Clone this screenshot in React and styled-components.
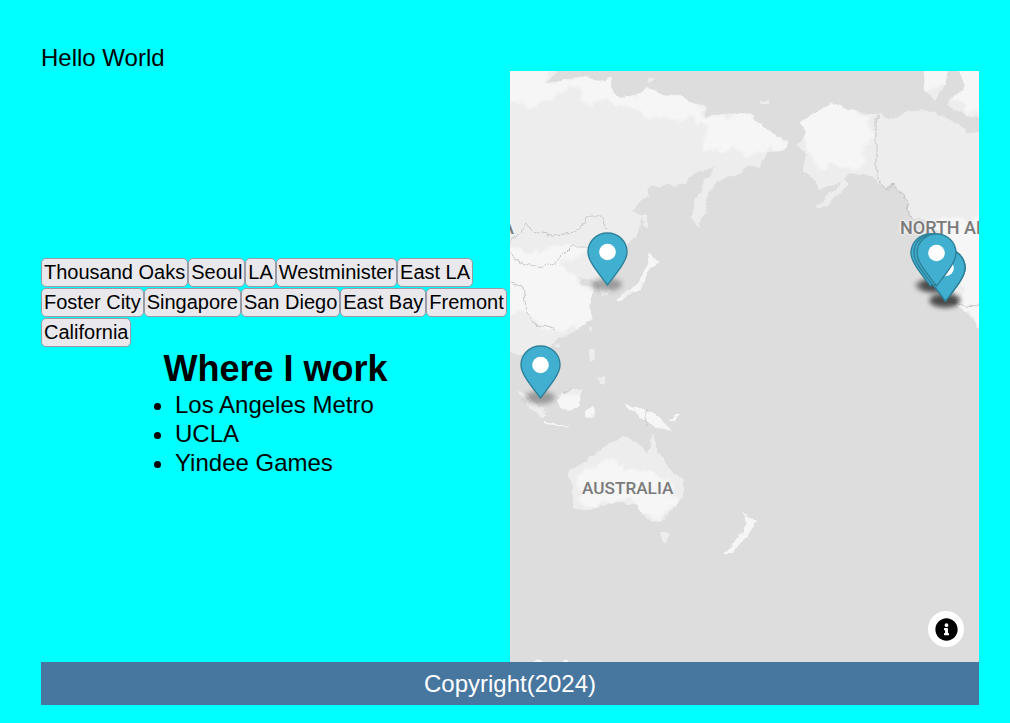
import React from 'react';
import styled, { createGlobalStyle } from 'styled-components';
import { FaInfoCircle } from 'react-icons/fa';

const GlobalStyle = createGlobalStyle`
  html, body {
    margin: 0;
    padding: 0;
    background: #00ffff;
    font-family: "Liberation Sans", Arial, sans-serif;
  }
`;

// ==============================================
// page layout
// ==============================================

const Page = styled.div`
  width: 1010px;
  height: 723px;
  box-sizing: border-box;
  padding: 44px 31px 18px 41px;
  display: flex;
  flex-direction: column;
  overflow: hidden;
`;

const Greeting = styled.div`
  font-size: 24px;
  line-height: 27px;
  color: #000;
`;

const Main = styled.main`
  display: grid;
  grid-template-columns: 469px 469px;
  height: 591px;
`;

const InfoColumn = styled.section`
  display: flex;
  flex-direction: column;
  justify-content: center;
  padding-top: 2px;
`;

const Footer = styled.footer`
  height: 43px;
  display: flex;
  align-items: center;
  justify-content: center;
  background: #47769f;
  color: #fff;
  font-size: 24px;
`;

// ==============================================
// city buttons and text
// ==============================================

const CityList = styled.div`
  display: flex;
  flex-wrap: wrap;
`;

const CityButton = styled.button`
  height: 29px;
  box-sizing: border-box;
  margin: 0 0 1px 0;
  padding: 0 2px;
  background: #e9e9ed;
  border: 1px solid #9a9aa6;
  border-radius: 5px;
  color: #000;
  font-family: inherit;
  font-size: 20px;
`;

const Heading = styled.h1`
  margin: 0;
  font-size: 36px;
  line-height: 41px;
  font-weight: 700;
  text-align: center;
`;

const WorkList = styled.ul`
  margin: 1px 0 0 134px;
  padding: 0;
  font-size: 24px;
  line-height: 29px;
`;

// ==============================================
// map
// ==============================================

const MapPanel = styled.div`
  position: relative;
  overflow: hidden;
  background: #dddddd;
`;

const MapDrawing = styled.svg`
  display: block;
  width: 469px;
  height: 591px;
`;

const MapLabel = styled.span`
  position: absolute;
  left: ${(p) => p.$left}px;
  top: ${(p) => p.$top}px;
  font-family: Roboto, "Liberation Sans", sans-serif;
  font-size: ${(p) => p.$size}px;
  font-weight: 500;
  line-height: 18px;
  white-space: nowrap;
  color: #7b7b7b;
  text-shadow: 0 0 3px #f4f4f4, 0 0 3px #f4f4f4, 0 0 3px #f4f4f4;
`;

const PinShadow = styled.div`
  position: absolute;
  left: ${(p) => p.$x - 15}px;
  top: ${(p) => p.$y - 7}px;
  width: 30px;
  height: 13px;
  border-radius: 50%;
  background: rgba(0, 0, 0, 0.3);
  filter: blur(2.5px);
`;

const PinMark = styled.svg`
  position: absolute;
  left: ${(p) => p.$x - 20.5}px;
  top: ${(p) => p.$y - 53}px;
  width: 41px;
  height: 54px;
`;

const InfoButton = styled.div`
  position: absolute;
  right: 15px;
  bottom: 15px;
  width: 36px;
  height: 36px;
  border-radius: 50%;
  background: #fff;
  display: flex;
  align-items: center;
  justify-content: center;
  color: #000;
  font-size: 23px;
`;

const cities = [
  'Thousand Oaks', 'Seoul', 'LA', 'Westminister', 'East LA', 'Foster City',
  'Singapore', 'San Diego', 'East Bay', 'Fremont', 'California',
];

const workplaces = ['Los Angeles Metro', 'UCLA', 'Yindee Games'];

// map coords: x - 510, y - 71 of the page, tips of the pins
const pins = [
  { x: 435, y: 230 },
  { x: 435, y: 230 },
  { x: 435, y: 230 },
  { x: 420, y: 215 },
  { x: 423, y: 215 },
  { x: 426, y: 215 },
  { x: 97, y: 214 },
  { x: 30, y: 327 },
];

const LAND = '#ededed';
const LIGHT = '#f6f6f6';

const land = [
  // asia
  'M495 55L557 55L557 71L545 84L560 80L575 75L590 78L597 80L608 78L612 90L620 98L640 94L650 88L665 94L690 100L705 107L706 116L723 114L750 113L763 125L777 137L790 142L782 150L770 151L762 160L760 168L750 168L727 177L717 180L710 193L700 227L692 217L692 203L707 180L715 167L697 172L687 183L653 187L633 210L643 216L636 235L622 250L612 262L608 275L612 290L603 296L597 282L592 277L580 278L582 285L592 287L592 300L590 320L577 330L560 337L552 345L545 350L548 362L530 358L526 352L495 355Z',
  // japan and sakhalin
  'M650 255L659 262L652 268L649 271L648 280L640 288L628 295L620 303L617 302L622 294L632 288L640 280L645 270L648 264Z',
  'M642 215L648 216L648 227L643 226Z',
  'M648 77L655 80L650 82Z',
  'M758 101L768 100L766 104L760 104Z',
  // north america
  'M830 102L850 110L877 115L893 120L907 112L923 110L937 113L950 120L967 130L995 133L995 345L968 315L957 303L952 290L962 270L957 253L945 235L928 222L913 217L907 203L893 185L885 188L870 177L853 172L845 178L850 185L825 205L813 207L835 190L843 180L828 187L822 188L803 173L808 153L798 145L808 133L800 123Z',
  // arctic islands
  'M923 55L950 55L945 85L935 100L925 90Z',
  'M955 55L995 55L995 120L965 115L945 105L955 95L965 85Z',
  // australia and new zealand
  'M568 470L593 457L607 445L623 437L637 440L647 453L652 435L658 450L667 467L683 480L683 497L670 513L660 523L645 520L638 503L620 503L587 510L573 508L573 490Z',
  'M660 533L670 533L665 543Z',
  'M743 512L757 522L748 533L733 553L725 553L740 533L747 525Z',
  // indonesia and around
  'M517 388L530 396L545 415L543 418L530 410L522 398Z',
  'M545 421L570 426L545 424Z',
  'M557 400L573 388L582 388L577 407L567 412L557 407Z',
  'M585 407L595 405L592 418L585 417Z',
  'M622 405L643 408L660 417L673 432L653 427L637 415Z',
  'M670 418L682 415L675 420Z',
  'M588 348L593 348L595 360L590 362Z',
  'M598 378L605 376L605 384L599 384Z',
  'M588 328L591 328L589 335Z',
  'M555 344L560 343L558 347Z',
  'M618 300L620 300L620 304Z',
];

const highlights = [
  'M495 55L557 55L545 84L575 75L560 92L530 110L495 95Z',
  'M560 76L608 76L620 100L650 86L705 105L705 122L680 122L640 110L610 100L580 100Z',
  'M706 116L750 113L790 142L770 151L750 150L722 150L705 150Z',
  'M495 250L570 245L590 250L560 262L575 280L600 300L585 325L555 335L535 315L495 310Z',
  'M610 280L660 250L660 270L620 305Z',
  'M830 100L870 115L877 140L860 165L815 168L805 150L798 123Z',
  'M923 55L950 55L945 85L925 90Z',
  'M955 55L995 55L995 120L950 100Z',
  'M925 222L995 215L995 345L957 303L962 270Z',
  'M575 478L610 462L640 470L670 480L678 497L660 520L645 518L636 498L595 505L578 500Z',
  'M540 400L600 385L600 420L540 425Z',
  'M620 400L680 410L680 435L620 420Z',
  'M720 505L760 505L760 560L720 560Z',
];

const borders = [
  'M495 262L520 232L525 224L535 232L553 235L573 233L587 223L588 217L600 217L608 230',
  'M510 255L523 263L543 268L560 260L573 247L587 247L605 245',
  'M510 283L523 287L527 313L540 325L555 330',
  'M877 115L877 178L885 188L893 185L907 203L913 217',
  'M565 395L573 388',
  'M647 408L647 428',
  'M952 302L965 304L995 306',
];

const Pin = ({ x, y }) => (
  <PinMark $x={x} $y={y} viewBox="0 0 41 54">
    <path
      d="M20.5 1C9.5 1 1 9.5 1 20C1 30 14 44 20.5 53C27 44 40 30 40 20C40 9.5 31.5 1 20.5 1Z"
      fill="#41afcf"
      stroke="#2e8199"
      strokeWidth="1.4"
    />
    <circle cx="20.5" cy="20" r="8.3" fill="#fff" />
  </PinMark>
);

const WorldMap = () => (
  <MapPanel>
    <MapDrawing viewBox="510 71 469 591">
      <defs>
        <filter id="coast" filterUnits="userSpaceOnUse" x="480" y="40" width="530" height="640">
          <feTurbulence type="fractalNoise" baseFrequency="0.07" numOctaves="4" seed="4" result="noise" />
          <feDisplacementMap in="SourceGraphic" in2="noise" scale="9" xChannelSelector="R" yChannelSelector="G" />
          <feGaussianBlur stdDeviation="0.4" />
        </filter>
        <filter id="patch" filterUnits="userSpaceOnUse" x="480" y="40" width="530" height="640">
          <feTurbulence type="fractalNoise" baseFrequency="0.05" numOctaves="4" seed="9" result="noise" />
          <feDisplacementMap in="SourceGraphic" in2="noise" scale="22" xChannelSelector="R" yChannelSelector="G" />
          <feGaussianBlur stdDeviation="0.8" />
        </filter>
        <clipPath id="landClip">
          {land.map((d) => <path key={d} d={d} />)}
        </clipPath>
      </defs>
      <g filter="url(#coast)">
        {land.map((d) => <path key={d} d={d} fill={LAND} />)}
        <g clipPath="url(#landClip)">
          <g filter="url(#patch)">
            {highlights.map((d) => <path key={d} d={d} fill={LIGHT} />)}
          </g>
        </g>
        {borders.map((d) => <path key={d} d={d} fill="none" stroke="#bdbdbd" strokeWidth="0.8" />)}
      </g>
      {/* bits of antarctica under the footer */}
      <path d="M533 662L538 659L544 662Z" fill={LIGHT} />
      <path d="M562 662L566 659L569 662Z" fill={LIGHT} />
    </MapDrawing>
    <MapLabel $left={-36} $top={148} $size={18}>ASIA</MapLabel>
    <MapLabel $left={390} $top={148} $size={18}>NORTH AMERICA</MapLabel>
    <MapLabel $left={72} $top={408} $size={17.2}>AUSTRALIA</MapLabel>
    {pins.map((p, i) => <PinShadow key={i} $x={p.x} $y={p.y} />)}
    {pins.map((p, i) => <Pin key={i} x={p.x} y={p.y} />)}
    <InfoButton><FaInfoCircle /></InfoButton>
  </MapPanel>
);

const App = () => (
  <Page>
    <GlobalStyle />
    <Greeting>Hello World</Greeting>
    <Main>
      <InfoColumn>
        <CityList>
          {cities.map((c) => <CityButton key={c}>{c}</CityButton>)}
        </CityList>
        <Heading>Where I work</Heading>
        <WorkList>
          {workplaces.map((w) => <li key={w}>{w}</li>)}
        </WorkList>
      </InfoColumn>
      <WorldMap />
    </Main>
    <Footer>Copyright(2024)</Footer>
  </Page>
);

export default App;
